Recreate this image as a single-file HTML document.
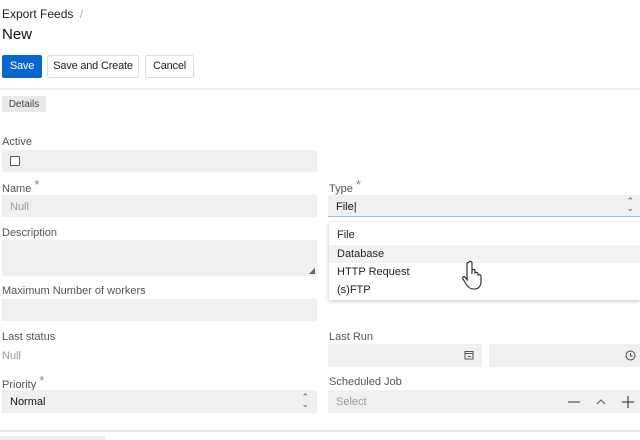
<!DOCTYPE html><html><head><style>
body{margin:0;width:640px;height:440px;overflow:hidden;background:#fff;font-family:"Liberation Sans",sans-serif;font-size:11px;color:#333;position:relative}
.a{position:absolute}
.lbl{position:absolute;color:#555;font-size:11px}
.in{position:absolute;background:#f0f0f0}
.btn{position:absolute;top:55px;height:21px;border:1px solid #ddd;border-radius:2px;line-height:21px;text-align:center;font-size:11px;color:#222;background:#fff;letter-spacing:-0.2px}
.star{color:#888;font-size:13px;position:relative;top:-3px;margin-left:3px}
.v{position:absolute;left:8px;top:6px}
</style></head><body>
<div class="a" style="left:2px;top:7px;font-size:12px;color:#222">Export Feeds <span style="color:#aaa;margin-left:3px">/</span></div>
<div class="a" style="left:2px;top:26px;font-size:15px;color:#111">New</div>
<div class="btn" style="left:2px;width:38px;background:#0a66cc;border-color:#0a66cc;color:#fff">Save</div>
<div class="btn" style="left:47px;width:90px">Save and Create</div>
<div class="btn" style="left:145px;width:47px">Cancel</div>
<div class="a" style="left:0;top:88px;width:640px;height:2px;background:#eee"></div>
<div class="a" style="left:2px;top:96px;width:44px;height:16px;background:#e9e9e9;font-size:10px;line-height:17px;text-align:center;color:#444">Details</div>

<div class="lbl" style="left:2px;top:136px">Active</div>
<div class="in" style="left:2px;top:150px;width:315px;height:22px"><div class="a" style="left:8px;top:6px;width:8px;height:8px;border:1px solid #555;border-radius:1px;background:#fff"></div></div>

<div class="lbl" style="left:2px;top:180px">Name<span class="star">*</span></div>
<div class="in" style="left:2px;top:195px;width:315px;height:22px"><span class="v" style="color:#999">Null</span></div>

<div class="lbl" style="left:329px;top:180px">Type<span class="star">*</span></div>
<div class="in" style="left:328px;top:195px;width:312px;height:21px;border-bottom:1px solid #9cc0e6"><span class="v" style="color:#111">File|</span><span class="a" style="right:6px;top:3px;font-size:9px;line-height:7px;color:#555">⌃<br>⌄</span></div>

<div class="lbl" style="left:2px;top:227px">Description</div>
<div class="in" style="left:2px;top:240px;width:315px;height:36px"><span class="a" style="right:2px;bottom:1px;font-size:8px;color:#666">◢</span></div>

<div class="lbl" style="left:2px;top:285px">Maximum Number of workers</div>
<div class="in" style="left:2px;top:299px;width:315px;height:22px"></div>

<div class="a" style="left:329px;top:222px;width:311px;height:78px;background:#fff;box-shadow:0 1px 4px rgba(0,0,0,.25);color:#222">
<div class="a" style="left:8px;top:7px">File</div>
<div class="a" style="left:0;top:23px;width:311px;height:18px;background:#f2f2f2"></div>
<div class="a" style="left:8px;top:26px">Database</div>
<div class="a" style="left:8px;top:44px">HTTP Request</div>
<div class="a" style="left:8px;top:62px">(s)FTP</div>
<svg class="a" style="left:133px;top:38px" width="28" height="32" viewBox="0 0 28 32"><path d="M7 2c1-1 3-1 3 1v11l0-4c1-1 3-1 3 1v2c1-1 3-1 3 1v1c1-1 3 0 3 1v6c0 4-3 7-6 7h-2c-3 0-5-2-7-5l-3-5c-1-2 1-3 2-2l2 3V3z" fill="#fff" stroke="#222" stroke-width="1.1"/></svg>
</div>

<div class="lbl" style="left:2px;top:331px">Last status</div>
<div class="a" style="left:2px;top:350px;color:#999">Null</div>
<div class="lbl" style="left:329px;top:331px">Last Run</div>
<div class="in" style="left:328px;top:344px;width:154px;height:23px"><svg class="a" style="right:8px;top:6px" width="10" height="10"><rect x="1" y="1.5" width="8" height="7.5" fill="none" stroke="#555"/><line x1="1" y1="3.5" x2="9" y2="3.5" stroke="#555"/><rect x="4" y="6" width="3" height="1" fill="#555"/></svg></div>
<div class="in" style="left:489px;top:344px;width:151px;height:23px"><svg class="a" style="right:4px;top:6px" width="11" height="11"><circle cx="5.5" cy="5.5" r="4.5" fill="none" stroke="#444"/><path d="M5.5 3v3h2" fill="none" stroke="#444"/></svg></div>

<div class="lbl" style="left:2px;top:376px">Priority<span class="star">*</span></div>
<div class="in" style="left:2px;top:390px;width:315px;height:23px"><span class="v" style="color:#111">Normal</span><span class="a" style="right:8px;top:4px;font-size:9px;line-height:7px;color:#555">⌃<br>⌄</span></div>
<div class="lbl" style="left:329px;top:376px">Scheduled Job</div>
<div class="in" style="left:328px;top:390px;width:312px;height:23px"><span class="v" style="color:#999">Select</span>
<svg class="a" style="left:238px;top:5px" width="74" height="14"><line x1="2" y1="7" x2="14" y2="7" stroke="#555" stroke-width="1.2"/><path d="M31 9l4-4 4 4" fill="none" stroke="#555"/><line x1="56" y1="7" x2="68" y2="7" stroke="#444" stroke-width="1.2"/><line x1="62" y1="1" x2="62" y2="13" stroke="#444" stroke-width="1.2"/></svg></div>
<div class="a" style="left:0;top:430px;width:640px;height:2px;background:#e6e6e6"></div>
<div class="a" style="left:0;top:436px;width:105px;height:4px;background:#eee"></div>
</body></html>
